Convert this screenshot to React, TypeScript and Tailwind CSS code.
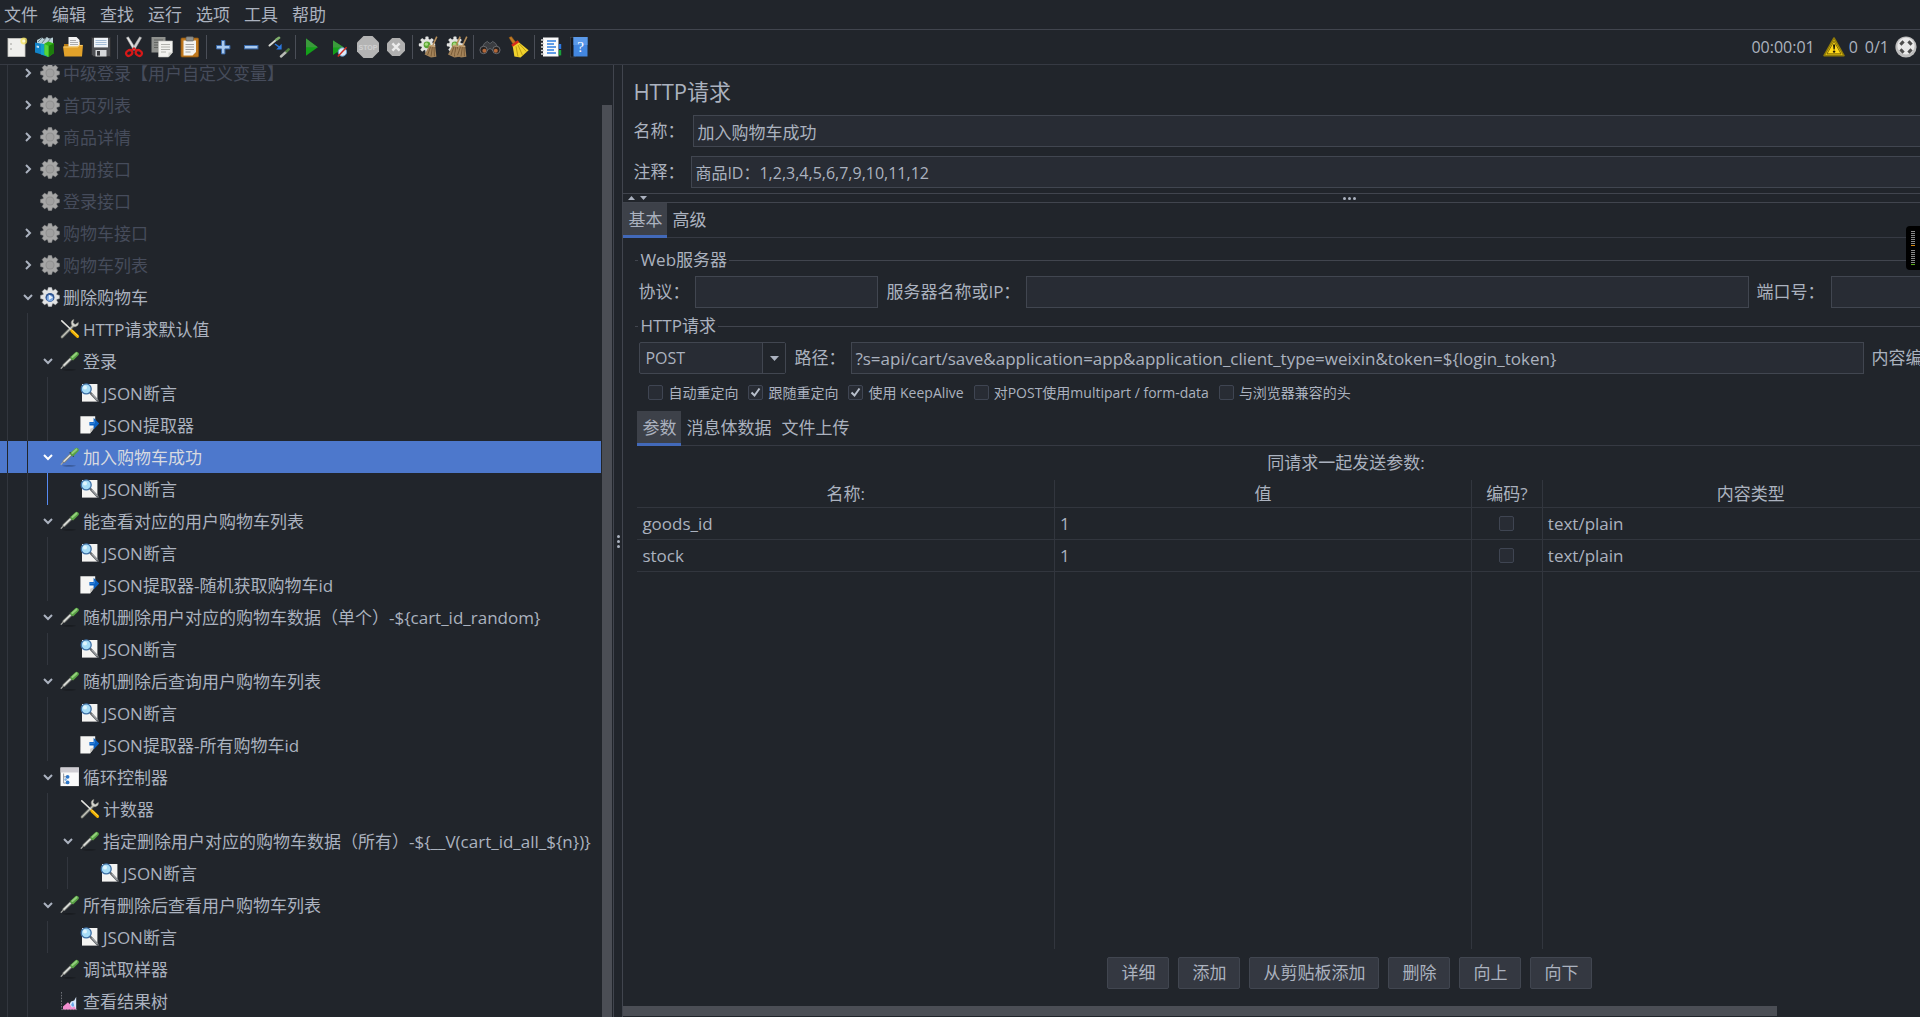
import { useState, type ReactNode } from 'react';

/* ---------- tree icons (20x20) ---------- */

function GearShape({ fill, stroke }: { fill: string; stroke: string }) {
  return (
    <g fill={fill} stroke={stroke} strokeWidth="0.5">
      {[0, 45, 90, 135].map((a) => (
        <path
          key={a}
          d="M8.4 0.6h3.2l1 3.4v12l-1 3.4H8.4l-1-3.4V4z"
          transform={`rotate(${a} 10 10)`}
        />
      ))}
      <circle cx="10" cy="10" r="6.8" stroke="none" />
    </g>
  );
}

function GearIcon({ active }: { active?: boolean }) {
  return (
    <svg viewBox="0 0 20 20" className="size-5 shrink-0" aria-hidden="true">
      {active ? (
        <>
          <GearShape fill="#e2e3e4" stroke="#c4c7ca" />
          <circle cx="10" cy="10.4" r="4.5" fill="#2d5390" />
          <circle cx="10" cy="11.2" r="3.2" fill="#7ba5de" />
          <path d="M8.8 7.6 12.8 10.6 8.8 13z" fill="#eaf2fb" />
        </>
      ) : (
        <>
          <GearShape fill="#a6a6a6" stroke="#9a9a9a" />
          <circle cx="10" cy="10" r="4.5" fill="#8f8f8f" />
          <circle cx="10" cy="10" r="3.5" fill="#a0a0a0" />
        </>
      )}
    </svg>
  );
}

function ToolsIcon() {
  return (
    <svg viewBox="0 0 20 20" className="size-5 shrink-0" aria-hidden="true" fill="none" strokeLinecap="round">
      <path d="M2 18 13 7" stroke="#8f9188" strokeWidth="2.6" />
      <path d="M2.3 17.6 12.6 7.3" stroke="#c9cbc4" strokeWidth="1" />
      <path d="M18.4 3.6a3.6 3.6 0 1 1-4.4-3l-1 3 2 1.8z" fill="#d5d6d0" stroke="#8f9188" strokeWidth="0.5" />
      <path d="M1.8 1.8 11 10.5" stroke="#e2e2de" strokeWidth="1.6" />
      <path d="M11.8 11.8 17.6 17.4" stroke="#f2b200" strokeWidth="3" />
      <path d="M12.2 11.4 17.6 16.6" stroke="#ffd84a" strokeWidth="1" />
    </svg>
  );
}

function DropperIcon() {
  return (
    <svg viewBox="0 0 20 20" className="size-5 shrink-0" aria-hidden="true" fill="none" strokeLinecap="round">
      <ellipse cx="9" cy="18.8" rx="7" ry="0.6" fill="#000" opacity="0.35" />
      <path d="M1.2 17.2 4 14.4" stroke="#a4a6a2" strokeWidth="1.3" />
      <path d="M4 14.4 10.8 7.8" stroke="#7f827d" strokeWidth="3.2" />
      <path d="M4 14.2 10.4 8" stroke="#e1e3df" strokeWidth="1.5" />
      <path d="M10.2 5.8 13.4 9" stroke="#33402f" strokeWidth="1.4" />
      <path d="M12.6 6.8 16.6 3" stroke="#58a045" strokeWidth="4.4" />
      <path d="M12.4 6 16.4 2.4" stroke="#93cf7c" strokeWidth="2" />
    </svg>
  );
}

function AssertIcon() {
  return (
    <svg viewBox="0 0 20 20" className="size-5 shrink-0" aria-hidden="true">
      <rect x="2" y="1" width="15.4" height="17.6" fill="#f4f4f2" />
      <path d="M10.5 10 17.8 17.8" stroke="#5d6165" strokeWidth="2.4" strokeLinecap="round" />
      <path d="M11.6 10.8 17.4 17" stroke="#c6c9cc" strokeWidth="0.9" />
      <circle cx="6.2" cy="5.9" r="5" fill="#a6dcf6" stroke="#3d6fa5" strokeWidth="1.3" />
      <circle cx="5" cy="4.6" r="2" fill="#dff4fd" />
    </svg>
  );
}

function ExtractIcon() {
  return (
    <svg viewBox="0 0 20 20" className="size-5 shrink-0" aria-hidden="true">
      <path d="M0.4 1.2h14.8v10.6L10 18.4H0.4z" fill="#f6f6f4" />
      <path d="M15.2 11.8 10 18.4l.2-4.6z" fill="#c9c9c6" />
      <path d="M9.4 7h4.2V2.8L19.2 8.6l-5.6 5.8v-3.8H9.4z" fill="#0b62c4" />
      <path d="M10 8.2h4.4V5.6" stroke="#4a95e6" strokeWidth="0.8" fill="none" />
    </svg>
  );
}

function LoopIcon() {
  return (
    <svg viewBox="0 0 20 20" className="size-5 shrink-0" aria-hidden="true">
      <rect x="0.5" y="0.5" width="18.4" height="18.6" fill="#fafafa" />
      <rect x="0.5" y="0.5" width="18.4" height="5" fill="#cfcdd3" />
      <path d="M3.6 6.5v9.6h3M3.6 9.8h3" stroke="#8b8f96" fill="none" strokeWidth="0.9" />
      <circle cx="7.6" cy="9.8" r="1.9" fill="#2f77c8" />
      <circle cx="7.6" cy="15.4" r="1.9" fill="#2f77c8" />
      <circle cx="5.6" cy="12.6" r="1.3" fill="#7fb0e2" />
    </svg>
  );
}

function ChartIcon() {
  return (
    <svg viewBox="0 0 20 20" className="size-5 shrink-0" aria-hidden="true">
      <path d="M1.5 1v17.6M1.5 18.6h16" stroke="#6d7076" strokeDasharray="1.6 1.2" fill="none" />
      <path d="M8 15.8 11 10.4 14.2 9.6 16.2 5.8V18H8z" fill="#d9e8fb" />
      <path d="M3 18.4V15.6l5-4.4 2.4 3 1.6 2.6 2.4-1.6 1.8 3.2z" fill="#f38fd0" />
      <path d="M11 14l2-3.4 1.2 3.8-1.2 1.6z" fill="#6aa5ea" />
    </svg>
  );
}

/* ---------- toolbar icons (22x22) ---------- */

function Svg({ children }: { children: ReactNode }) {
  return (
    <svg viewBox="0 0 22 22" className="size-[22px]" aria-hidden="true" fill="none">
      {children}
    </svg>
  );
}

const NewIcon = () => (
  <Svg>
    <rect x="2" y="2.5" width="17" height="18" fill="#efefec" stroke="#c8c8c4" strokeWidth="0.8" />
    <path d="M4 8h2M4 13h2" stroke="#8d8d88" strokeWidth="0.8" />
    <circle cx="17.8" cy="5" r="3.4" fill="#f6e35c" opacity="0.75" />
    <circle cx="17.8" cy="5" r="1.6" fill="#fffbd0" />
  </Svg>
);
const TemplatesIcon = () => (
  <Svg>
    <path d="M3 4 8 1.5l2 1.5 3-2 2 1.5 4-1v7H3z" fill="#b9cfd6" />
    <path d="M4 6 8 2M8 7l4-5M13 7l4-5" stroke="#61747c" strokeWidth="0.9" />
    <path d="M1 6.5 9 8v11L1 16.5z" fill="#1283c8" />
    <path d="M2.6 9.6 5 10v2L2.6 11.6z" fill="#c8e6f7" />
    <path d="M7 7.6 14 9v12L7 18.4z" fill="#12a0c9" />
    <path d="m10.5 7.5 4-2 5.5 2v9.5L14.5 21l-4-2.5z" fill="#33b418" />
    <path d="m14.5 10 5.5-2.5v9.5L14.5 21z" fill="#1d7d0d" />
    <path d="m10.5 8 4 2v11l-4-2.5z" fill="#58d436" />
  </Svg>
);
const OpenIcon = () => (
  <Svg>
    <path d="M2 8h5l1-2h10v6H2z" fill="#b57a14" />
    <path d="M6.5 1h8l3 3v9h-11z" fill="#f3f3f3" />
    <path d="M8 4.5h6M8 6.5h8M8 8.5h8" stroke="#9a9a9a" strokeWidth="0.8" />
    <path d="M1 10.5h14.5l2-1.6H21l-1 11.6H2.4z" fill="#e2a22a" />
    <path d="M1.6 11h14l2-1.6h2.8" stroke="#f9d47c" strokeWidth="0.9" />
  </Svg>
);
const SaveIcon = () => (
  <Svg>
    <path d="M1.5 1.5h19v19h-17l-2-2z" fill="#4d4f53" stroke="#2d2e31" />
    <rect x="4" y="1.8" width="14" height="9.6" fill="#eef3f8" />
    <path d="M5.5 4.5h11M5.5 6.5h11M5.5 8.5h11" stroke="#9db8d3" strokeWidth="0.9" />
    <rect x="5.5" y="14" width="11" height="6.5" fill="#d5d7da" />
    <rect x="7" y="15" width="3" height="4.6" fill="#3a3b3e" />
  </Svg>
);
const CutIcon = () => (
  <Svg>
    <path d="M3.4 1.8 5.4.8 13 13 10.6 14.2z" fill="#e4e4e4" stroke="#a7a7a7" strokeWidth="0.5" />
    <path d="M18.6 1.8 16.6.8 9 13l2.4 1.2z" fill="#cfcfcf" stroke="#a7a7a7" strokeWidth="0.5" />
    <ellipse cx="6.2" cy="17" rx="3.2" ry="2.6" stroke="#d81818" strokeWidth="2.2" transform="rotate(-35 6.2 17)" />
    <ellipse cx="15.8" cy="17" rx="3.2" ry="2.6" stroke="#d81818" strokeWidth="2.2" transform="rotate(35 15.8 17)" />
    <path d="M8.6 14.4l2.4-2.2 2.4 2.2" stroke="#d81818" strokeWidth="1.8" />
  </Svg>
);
const CopyIcon = () => (
  <Svg>
    <rect x="0.5" y="1" width="14" height="15.5" fill="#8f918e" />
    <path d="M3 4h9M3 6.5h6M3 9h4M3 11.5h4" stroke="#5f615f" strokeWidth="0.9" />
    <path d="M7.5 5h14v11.5L17.5 21h-10z" fill="#f2f2ef" stroke="#b9bab5" strokeWidth="0.6" />
    <path d="M10 8.5h9M10 11h9M10 13.5h9M10 16h5" stroke="#a9aaa6" strokeWidth="0.9" />
    <path d="M21.5 16.5h-4V21z" fill="#cfd0cb" />
  </Svg>
);
const PasteIcon = () => (
  <Svg>
    <rect x="2" y="2" width="17.5" height="19" rx="1" fill="#c0791e" stroke="#8b5410" strokeWidth="0.8" />
    <path d="M4.5 4.5h12.5V16l-3.5 3.5h-9z" fill="#f3f3f0" />
    <path d="M6.5 8.5h8.5M6.5 11h8.5M6.5 13.5h8.5M6.5 16h5" stroke="#999a97" strokeWidth="0.9" />
    <rect x="7" y="0.8" width="7.5" height="4.2" rx="1" fill="#8f918e" stroke="#5c5e5b" strokeWidth="0.6" />
  </Svg>
);
const PlusIcon = () => (
  <Svg>
    <path d="M9.5 4.5h3.4v5h5v3.4h-5v5H9.5v-5h-5V9.5h5z" fill="#a9caef" stroke="#3868a8" />
  </Svg>
);
const MinusIcon = () => (
  <Svg>
    <rect x="4.5" y="9.5" width="13.4" height="3.4" fill="#a9caef" stroke="#3868a8" />
  </Svg>
);
const ToggleIcon = () => (
  <Svg>
    <g strokeLinecap="round">
      <path d="M1.5 9.5 8 4" stroke="#d8dad4" strokeWidth="2" />
      <path d="M8.4 3.6 11 1.8" stroke="#7fae6c" strokeWidth="2.6" />
      <path d="M13 20.5l5-4.5" stroke="#b9bbb6" strokeWidth="2.4" />
      <path d="M18.6 15.4 20.6 13.4" stroke="#4f7d3f" strokeWidth="2.6" />
    </g>
    <path d="M7 8 12 11.6" stroke="#2b78e0" strokeWidth="1.4" />
    <path d="M13.6 7.8V13.4H8.2z" fill="#2b78e0" />
  </Svg>
);
const PlayIcon = () => (
  <Svg>
    <path d="M5 2.5 16.8 11.2 5 19.8z" fill="#14a01a" />
    <path d="M5 2.5 16.8 11.2H5z" fill="#3b9a3c" />
  </Svg>
);
const PlayNoTimersIcon = () => (
  <Svg>
    <path d="M4 4.5 15 11.5 4 19z" fill="#14a01a" />
    <path d="M4 4.5 15 11.5H4z" fill="#3b9a3c" />
    <circle cx="13.4" cy="16" r="4.2" fill="#dbe9f7" stroke="#6c9bc9" />
    <path d="M8.8 20.4 17.6 11.2" stroke="#d02a1e" strokeWidth="1.5" />
  </Svg>
);
const StopIcon = () => (
  <Svg>
    <path d="M6.5 0h9L22 6.5v9L15.5 22h-9L0 15.5v-9z" fill="#b4b4b4" />
    <text x="11" y="14" textAnchor="middle" fontSize="7" fontWeight="700" fill="#d0d0d0" fontFamily="Liberation Sans, sans-serif">
      STOP
    </text>
  </Svg>
);
const ShutdownIcon = () => (
  <Svg>
    <path d="M7.2 2h7.6L20 7.2v7.6L14.8 20H7.2L2 14.8V7.2z" fill="#b0b0b0" />
    <path d="m7.4 7.4 7.2 7.2M14.6 7.4l-7.2 7.2" stroke="#ececec" strokeWidth="2.4" />
  </Svg>
);
function CleanGear() {
  return (
    <g>
      {[0, 45, 90, 135].map((a) => (
        <rect key={a} x="7.4" y="0.6" width="3.2" height="16.4" rx="0.8" fill="#e3e4e2" transform={`rotate(${a} 9 8.8)`} />
      ))}
      <circle cx="9" cy="8.8" r="6" fill="#e3e4e2" />
      <circle cx="9" cy="8.8" r="3.4" fill="#5ca636" />
      <circle cx="8.4" cy="8.2" r="1.6" fill="#a7dc82" />
    </g>
  );
}
function StrawBroom() {
  return (
    <g>
      <path d="M18.8.6 15 9" stroke="#b78f5a" strokeWidth="1.6" />
      <path d="M11.6 8.8 17.2 9.6 18.4 20.8 13 21.4 6.6 18.6z" fill="#a5845a" />
      <path d="M12.6 10.6 9.6 19M14.4 10.8l-1.4 9.6M16 10.6l.4 9.6" stroke="#6f5230" strokeWidth="0.8" />
      <path d="M11.4 9.6 17.2 10.4" stroke="#d6b483" strokeWidth="1" />
    </g>
  );
}
const ClearIcon = () => (
  <Svg>
    <CleanGear />
    <StrawBroom />
  </Svg>
);
const ClearAllIcon = () => (
  <Svg>
    <CleanGear />
    <g transform="translate(-4.6 0)">
      <StrawBroom />
    </g>
    <g transform="translate(2 0)">
      <StrawBroom />
    </g>
  </Svg>
);
const SearchIcon = () => (
  <Svg>
    <path d="M5.4 7.4 8.4 5.4l1.8 1.8h1.6l1.8-1.8 3 2 2.8 5.2-5.4 2.6-1.8-2.4H9.8L8 15.2l-5.4-2.6z" fill="#3a3c40" stroke="#6b6e74" strokeWidth="0.8" />
    <circle cx="4.6" cy="14" r="3.7" fill="#26211f" stroke="#7b7e84" strokeWidth="0.8" />
    <circle cx="17.4" cy="14" r="3.7" fill="#26211f" stroke="#7b7e84" strokeWidth="0.8" />
    <circle cx="5.4" cy="14.8" r="2" fill="#b4683a" />
    <circle cx="16.8" cy="14.8" r="2" fill="#b4683a" />
  </Svg>
);
const BroomIcon = () => (
  <Svg>
    <path d="M2 1.6 4.4.6 9.4 7 6.6 9z" fill="#c07a25" stroke="#8a5415" strokeWidth="0.5" />
    <path d="M5.6 9.4 11 5.6 21.6 14.2 13.6 21.6 7.4 20.4z" fill="#f0d22c" />
    <path d="M9 10.4 11 20.6M11 9l4.6 10.6M12.4 8l7 7.6" stroke="#b89712" strokeWidth="0.9" />
    <path d="M5 9.8 11.4 5.2" stroke="#d42b1c" strokeWidth="2.6" />
  </Svg>
);
const FunctionIcon = () => (
  <Svg>
    <rect x="3" y="1.5" width="15.5" height="19" fill="#fafafa" />
    <path d="M7 5h9M7 8h7M7 11h9M7 14h7M7 17h9" stroke="#2f7fe0" strokeWidth="1.3" />
    <path d="M1 4h3M1 7.5h3M1 11h3M1 14.5h3M1 18h3" stroke="#d5d5d5" strokeWidth="1.4" />
    <rect x="18.8" y="8" width="2.4" height="5" fill="#2b78e0" />
    <rect x="18.8" y="14" width="2.4" height="5.4" fill="#17a13a" />
  </Svg>
);
const HelpIcon = () => (
  <Svg>
    <rect x="2.5" y="1.5" width="5" height="19.5" fill="#16181c" stroke="#4a4d52" strokeWidth="0.5" />
    <rect x="5.5" y="1" width="14" height="19.5" fill="#4387e0" />
    <rect x="5.5" y="1" width="14" height="8" fill="#5b9aea" />
    <text x="12.5" y="16.4" textAnchor="middle" fontSize="15" fill="#fff" fontFamily="Liberation Serif, serif">
      ?
    </text>
  </Svg>
);

const TOOL_GROUPS: { label: string; icon: () => ReactNode }[][] = [
  [
    { label: '新建', icon: NewIcon },
    { label: '模板', icon: TemplatesIcon },
    { label: '打开', icon: OpenIcon },
    { label: '保存', icon: SaveIcon },
  ],
  [
    { label: '剪切', icon: CutIcon },
    { label: '复制', icon: CopyIcon },
    { label: '粘贴', icon: PasteIcon },
  ],
  [
    { label: '全部展开', icon: PlusIcon },
    { label: '全部折叠', icon: MinusIcon },
    { label: '切换', icon: ToggleIcon },
  ],
  [
    { label: '启动', icon: PlayIcon },
    { label: '不停顿开始', icon: PlayNoTimersIcon },
    { label: '停止', icon: StopIcon },
    { label: '关闭', icon: ShutdownIcon },
  ],
  [
    { label: '清除', icon: ClearIcon },
    { label: '清除全部', icon: ClearAllIcon },
  ],
  [
    { label: '搜索', icon: SearchIcon },
    { label: '重置搜索', icon: BroomIcon },
  ],
  [
    { label: '函数助手', icon: FunctionIcon },
    { label: '帮助文档', icon: HelpIcon },
  ],
];

function MenuBar() {
  return (
    <nav className="flex h-[30px] shrink-0 items-center gap-3.5 border-b border-[#41454e] px-1">
      {['文件', '编辑', '查找', '运行', '选项', '工具', '帮助'].map((m) => (
        <button key={m} type="button">
          {m}
        </button>
      ))}
    </nav>
  );
}

function Toolbar() {
  return (
    <div className="flex h-[35px] shrink-0 items-center border-b border-[#363a43] px-[3px]">
      {TOOL_GROUPS.map((group, i) => (
        <div key={group[0].label} className="flex items-center">
          {i > 0 && <span className="mx-0.5 h-6 w-px bg-[#4a4e57]" />}
          {group.map(({ label, icon: Icon }) => (
            <button key={label} type="button" aria-label={label} className="flex w-7 items-center justify-center">
              <Icon />
            </button>
          ))}
        </div>
      ))}
      <div className="ml-auto flex items-center text-base">
        <span>00:00:01</span>
        <svg viewBox="0 0 22 20" className="ml-2 h-5 w-[22px]" role="img" aria-label="警告">
          <path d="M11 1 21 18.6H1z" fill="#f5cf10" stroke="#8f7a08" strokeWidth="1.6" strokeLinejoin="round" />
          <path d="M11 4.2 18 16.8H4z" fill="#ffd91a" stroke="#4a3f02" strokeWidth="0.7" />
          <path d="M10 7.5h2.2l-.5 5h-1.2z" fill="#1d1a05" />
          <circle cx="11.1" cy="14.6" r="1.2" fill="#1d1a05" />
        </svg>
        <span className="ml-1">0</span>
        <span className="ml-[7px]">0/1</span>
        <svg viewBox="0 0 22 22" className="ml-1.5 size-[22px]" aria-hidden="true">
          <circle cx="11" cy="11" r="10.6" fill="#bdbdbd" />
          <circle cx="11" cy="10" r="8.6" fill="#e9e9e9" />
          <g stroke="#4c4c4c" strokeWidth="3">
            <path d="M5.4 8.6 8.6 5.4M13.4 5.4l3.2 3.2M16.6 13.4l-3.2 3.2M8.6 16.6 5.4 13.4" />
          </g>
        </svg>
      </div>
    </div>
  );
}

/* ---------- test plan tree ---------- */

type Kind = 'gear' | 'gearOn' | 'tools' | 'dropper' | 'assert' | 'extract' | 'loop' | 'chart';
type Node = { d: number; k: Kind; t: string; a?: 'open' | 'closed'; off?: boolean; sel?: boolean; hot?: boolean };

const NODES: Node[] = [
  { d: 1, k: 'gear', t: '中级登录【用户自定义变量】', a: 'closed', off: true },
  { d: 1, k: 'gear', t: '首页列表', a: 'closed', off: true },
  { d: 1, k: 'gear', t: '商品详情', a: 'closed', off: true },
  { d: 1, k: 'gear', t: '注册接口', a: 'closed', off: true },
  { d: 1, k: 'gear', t: '登录接口', off: true },
  { d: 1, k: 'gear', t: '购物车接口', a: 'closed', off: true },
  { d: 1, k: 'gear', t: '购物车列表', a: 'closed', off: true },
  { d: 1, k: 'gearOn', t: '删除购物车', a: 'open' },
  { d: 2, k: 'tools', t: 'HTTP请求默认值' },
  { d: 2, k: 'dropper', t: '登录', a: 'open' },
  { d: 3, k: 'assert', t: 'JSON断言' },
  { d: 3, k: 'extract', t: 'JSON提取器' },
  { d: 2, k: 'dropper', t: '加入购物车成功', a: 'open', sel: true },
  { d: 3, k: 'assert', t: 'JSON断言', hot: true },
  { d: 2, k: 'dropper', t: '能查看对应的用户购物车列表', a: 'open' },
  { d: 3, k: 'assert', t: 'JSON断言' },
  { d: 3, k: 'extract', t: 'JSON提取器-随机获取购物车id' },
  { d: 2, k: 'dropper', t: '随机删除用户对应的购物车数据（单个）-${cart_id_random}', a: 'open' },
  { d: 3, k: 'assert', t: 'JSON断言' },
  { d: 2, k: 'dropper', t: '随机删除后查询用户购物车列表', a: 'open' },
  { d: 3, k: 'assert', t: 'JSON断言' },
  { d: 3, k: 'extract', t: 'JSON提取器-所有购物车id' },
  { d: 2, k: 'loop', t: '循环控制器', a: 'open' },
  { d: 3, k: 'tools', t: '计数器' },
  { d: 3, k: 'dropper', t: '指定删除用户对应的购物车数据（所有）-${__V(cart_id_all_${n})}', a: 'open' },
  { d: 4, k: 'assert', t: 'JSON断言' },
  { d: 2, k: 'dropper', t: '所有删除后查看用户购物车列表', a: 'open' },
  { d: 3, k: 'assert', t: 'JSON断言' },
  { d: 2, k: 'dropper', t: '调试取样器' },
  { d: 2, k: 'chart', t: '查看结果树' },
];

const NODE_ICONS: Record<Kind, ReactNode> = {
  gear: <GearIcon />,
  gearOn: <GearIcon active />,
  tools: <ToolsIcon />,
  dropper: <DropperIcon />,
  assert: <AssertIcon />,
  extract: <ExtractIcon />,
  loop: <LoopIcon />,
  chart: <ChartIcon />,
};

function TreeRow({ node }: { node: Node }) {
  const { d, k, t, a, off, sel, hot } = node;
  return (
    <li
      role="treeitem"
      aria-level={d}
      aria-selected={!!sel}
      aria-expanded={a ? a === 'open' : undefined}
      className={`flex h-8 shrink-0 items-center pl-[7px] ${sel ? 'bg-[#4d78cc] text-[#d7dae0]' : off ? 'text-[#464c5b]' : ''}`}
    >
      {Array.from({ length: d }, (_, i) => (
        <span
          key={i}
          className={`h-full shrink-0 border-l ${i === d - 1 ? 'w-3' : 'w-5'} ${
            sel ? 'border-[#21252b]' : hot && i === d - 1 ? 'border-[#568af2]' : 'border-[#32363e]'
          }`}
        />
      ))}
      <span className="mr-1 flex w-[17px] shrink-0 items-center justify-center">
        {a && (
          <svg viewBox="0 0 10 10" className="size-2.5" fill="none" stroke={sel ? '#fff' : '#abb2bf'} strokeWidth="2" aria-hidden="true">
            <path d={a === 'open' ? 'M1 3l4 4 4-4' : 'M3 1l4 4-4 4'} />
          </svg>
        )}
      </span>
      {NODE_ICONS[k]}
      <span className="ml-[3px] whitespace-nowrap pt-px">{t}</span>
    </li>
  );
}

function TreePane() {
  return (
    <aside className="flex w-[32%] shrink-0 overflow-hidden border-r border-[#41454e]">
      <ul role="tree" aria-label="测试计划" className="-mt-2 flex min-w-0 flex-1 flex-col overflow-hidden">
        {NODES.map((n, i) => (
          <TreeRow key={i} node={n} />
        ))}
      </ul>
      <div className="flex w-3 shrink-0 flex-col px-px pt-10">
        <div className="flex-1 bg-[#4b4e55]" />
      </div>
    </aside>
  );
}

/* ---------- request editor ---------- */

const FIELD = 'h-8 min-w-0 border border-[#414650] bg-[#282c34] px-[3px] outline-none';

function Tabs({ items, label }: { items: string[]; label: string }) {
  const [current, setCurrent] = useState(0);
  return (
    <div role="tablist" aria-label={label} className="flex h-[35px] shrink-0 border-b border-[#363a43]">
      {items.map((t, i) => (
        <button
          key={t}
          type="button"
          role="tab"
          aria-selected={i === current}
          onClick={() => setCurrent(i)}
          className={`-mb-px border-b-[3px] px-[5px] pt-0.5 ${
            i === current ? 'border-[#4269b9] bg-[#3d4149]' : 'border-transparent'
          }`}
        >
          {t}
        </button>
      ))}
    </div>
  );
}

function Check({ id, label, on }: { id?: string; label: string; on?: boolean }) {
  return (
    <span className="flex items-center">
      <span className="relative flex size-[15px]">
        <input
          id={id}
          type="checkbox"
          defaultChecked={on}
          aria-label={id ? undefined : label}
          className="peer size-[15px] appearance-none rounded-xs border border-[#3f4552] bg-[#282c34]"
        />
        <svg
          viewBox="0 0 15 15"
          className="pointer-events-none absolute inset-0 hidden size-[15px] peer-checked:block"
          fill="none"
          stroke="#b9c0cc"
          strokeWidth="2"
          aria-hidden="true"
        >
          <path d="M3.5 7.5 6.5 10.5 11.5 3.5" />
        </svg>
      </span>
      {id && (
        <label htmlFor={id} className="ml-[5px] whitespace-nowrap text-sm">
          {label}
        </label>
      )}
    </span>
  );
}

const OPTIONS = [
  { id: 'auto-redirect', label: '自动重定向', on: false },
  { id: 'follow-redirect', label: '跟随重定向', on: true },
  { id: 'keepalive', label: '使用 KeepAlive', on: true },
  { id: 'multipart', label: '对POST使用multipart / form-data', on: false },
  { id: 'compat-headers', label: '与浏览器兼容的头', on: false },
];

const CELL = 'border-b border-l border-[#32363e] first:border-l-0';

function ParamsTable() {
  return (
    <table className="h-full w-full table-fixed border-separate border-spacing-0 text-left">
      <colgroup>
        <col />
        <col />
        <col className="w-[71px]" />
        <col />
        <col className="w-24" />
      </colgroup>
      <thead>
        <tr className="h-7">
          {['名称:', '值', '编码?', '内容类型', '包含等于?'].map((h) => (
            <th key={h} scope="col" className={`${CELL} p-0 text-center font-normal`}>
              {h}
            </th>
          ))}
        </tr>
      </thead>
      <tbody>
        {['goods_id', 'stock'].map((name) => (
          <tr key={name} className="h-8">
            <td className={`${CELL} px-[5px] py-0`}>{name}</td>
            <td className={`${CELL} px-[5px] py-0`}>1</td>
            <td className={`${CELL} p-0`}>
              <div className="flex justify-center">
                <Check label={`${name} 编码`} />
              </div>
            </td>
            <td className={`${CELL} px-[5px] py-0`}>text/plain</td>
            <td className={`${CELL} p-0`}>
              <div className="flex justify-center">
                <Check label={`${name} 包含等于`} on />
              </div>
            </td>
          </tr>
        ))}
        <tr>
          {[0, 1, 2, 3, 4].map((c) => (
            <td key={c} className="border-l border-[#32363e] p-0 first:border-l-0" />
          ))}
        </tr>
      </tbody>
    </table>
  );
}

function Editor() {
  return (
    <main className="flex min-w-0 flex-1 flex-col overflow-hidden border-l border-[#41454e]">
      <div className="min-h-0 flex-1 overflow-hidden">
        <div className="flex h-full w-[112%] flex-col">
          <header className="flex flex-col pl-2.5">
            <h1 className="flex h-[50px] items-center pt-0.5 text-[22px]">HTTP请求</h1>
            <div className="flex items-center">
              <label htmlFor="name" className="w-[60px]">
                名称：
              </label>
              <input id="name" className={`${FIELD} flex-1`} defaultValue="加入购物车成功" />
            </div>
            <div className="mt-[9px] flex items-center">
              <label htmlFor="comment" className="w-[58px]">
                注释：
              </label>
              <input id="comment" className={`${FIELD} flex-1 text-base`} defaultValue="商品ID：1,2,3,4,5,6,7,9,10,11,12" />
            </div>
          </header>

          <div className="mt-[5px] flex h-2.5 shrink-0 items-center border-y border-[#41454e] px-[5px]">
            <div className="flex flex-1 gap-[5px]">
              <svg viewBox="0 0 7 4" className="h-1 w-[7px]" fill="#abb2bf" aria-hidden="true">
                <path d="M0 4 3.5 0 7 4z" />
              </svg>
              <svg viewBox="0 0 7 4" className="h-1 w-[7px]" fill="#abb2bf" aria-hidden="true">
                <path d="M0 0 3.5 4 7 0z" />
              </svg>
            </div>
            <div className="flex gap-0.5">
              {[0, 1, 2].map((i) => (
                <span key={i} className="size-[3px] rounded-full bg-[#abb2bf]" />
              ))}
            </div>
            <div className="flex-1" />
          </div>

          <Tabs label="请求配置" items={['基本', '高级']} />

          <div className="flex min-h-0 flex-1 flex-col pl-3 pr-[9px]">
            <fieldset className="mt-2.5 min-w-0 border-t border-[#41454e] px-[3px]">
              <legend className="h-6 px-0.5 leading-6">Web服务器</legend>
              <div className="mt-1 flex items-center">
                <label htmlFor="protocol" className="w-[57px] shrink-0">
                  协议：
                </label>
                <input id="protocol" className={`${FIELD} w-[183px]`} />
                <label htmlFor="server" className="ml-2 w-[140px] shrink-0">
                  服务器名称或IP：
                </label>
                <input id="server" className={`${FIELD} flex-1`} />
                <label htmlFor="port" className="ml-2 w-[74px] shrink-0">
                  端口号：
                </label>
                <input id="port" className={`${FIELD} w-[233px]`} />
              </div>
            </fieldset>

            <fieldset className="mt-1.5 min-w-0 border-t border-[#41454e] px-[3px]">
              <legend className="h-6 px-0.5 leading-6">HTTP请求</legend>
              <div className="mt-1 flex items-center pl-px">
                <div className="relative flex h-8 w-[147px] shrink-0 rounded-xs border border-[#414650] bg-[#282c34]">
                  <select aria-label="方法" className="w-full appearance-none bg-transparent px-[5px] text-base outline-none">
                    <option>POST</option>
                    <option>GET</option>
                    <option>PUT</option>
                    <option>DELETE</option>
                  </select>
                  <span className="pointer-events-none absolute inset-y-0 right-0 flex w-[23px] items-center justify-center border-l border-[#414650] bg-[#21252b]">
                    <svg viewBox="0 0 9 5" className="h-[5px] w-[9px]" fill="#abb2bf" aria-hidden="true">
                      <path d="M0 0h9L4.5 5z" />
                    </svg>
                  </span>
                </div>
                <label htmlFor="path" className="ml-2 w-[57px] shrink-0">
                  路径：
                </label>
                <input
                  id="path"
                  className={`${FIELD} flex-1`}
                  defaultValue="?s=api/cart/save&application=app&application_client_type=weixin&token=${login_token}"
                />
                <label htmlFor="encoding" className="ml-2 w-[90px] shrink-0">
                  内容编码：
                </label>
                <input id="encoding" className={`${FIELD} w-[102px]`} />
              </div>
            </fieldset>

            <div className="flex h-[37px] shrink-0 items-center gap-2.5 pl-[13px]">
              {OPTIONS.map((o) => (
                <Check key={o.id} {...o} />
              ))}
            </div>

            <div className="flex min-h-0 flex-1 flex-col pl-0.5 pr-3">
              <Tabs label="请求数据" items={['参数', '消息体数据', '文件上传']} />
              <p className="flex h-[34px] shrink-0 items-center justify-center">同请求一起发送参数:</p>
              <div className="min-h-0 flex-1">
                <ParamsTable />
              </div>
              <div className="flex shrink-0 justify-center gap-[9px] pb-[17px] pl-2 pt-2">
                {['详细', '添加', '从剪贴板添加', '删除', '向上', '向下'].map((b) => (
                  <button key={b} type="button" className="h-8 rounded-xs border border-[#414650] bg-[#343841] px-[13px]">
                    {b}
                  </button>
                ))}
              </div>
            </div>
          </div>
        </div>
      </div>
      <div className="h-[11px] shrink-0 pb-px">
        <div className="h-full w-[89%] bg-[#4b4e55]" />
      </div>
    </main>
  );
}

function LevelMeter() {
  return (
    <div className="absolute right-0 top-[226px] flex w-3.5 flex-col items-center gap-1 rounded-l-sm bg-black py-[5px]" aria-hidden="true">
      {['bg-[#d98c14]', 'bg-[#5fae1e]'].map((last) => (
        <div key={last} className="flex flex-col gap-px">
          {[0, 1, 2, 3, 4, 5, 6].map((i) => (
            <span key={i} className="h-px w-1 bg-[#8a8a8a]" />
          ))}
          <span className={`h-px w-1 ${last}`} />
        </div>
      ))}
    </div>
  );
}

export default function App() {
  return (
    <div className="relative flex h-screen flex-col overflow-hidden bg-[#21252b] font-['Open_Sans','Noto_Sans_CJK_SC',sans-serif] text-[17px] leading-6 text-[#abb2bf]">
      <MenuBar />
      <Toolbar />
      <div className="flex min-h-0 flex-1">
        <TreePane />
        <div className="flex w-2 shrink-0 flex-col items-center justify-center gap-0.5" role="separator" aria-orientation="vertical">
          {[0, 1, 2].map((i) => (
            <span key={i} className="size-[3px] rounded-full bg-[#abb2bf]" />
          ))}
        </div>
        <Editor />
      </div>
      <LevelMeter />
    </div>
  );
}
